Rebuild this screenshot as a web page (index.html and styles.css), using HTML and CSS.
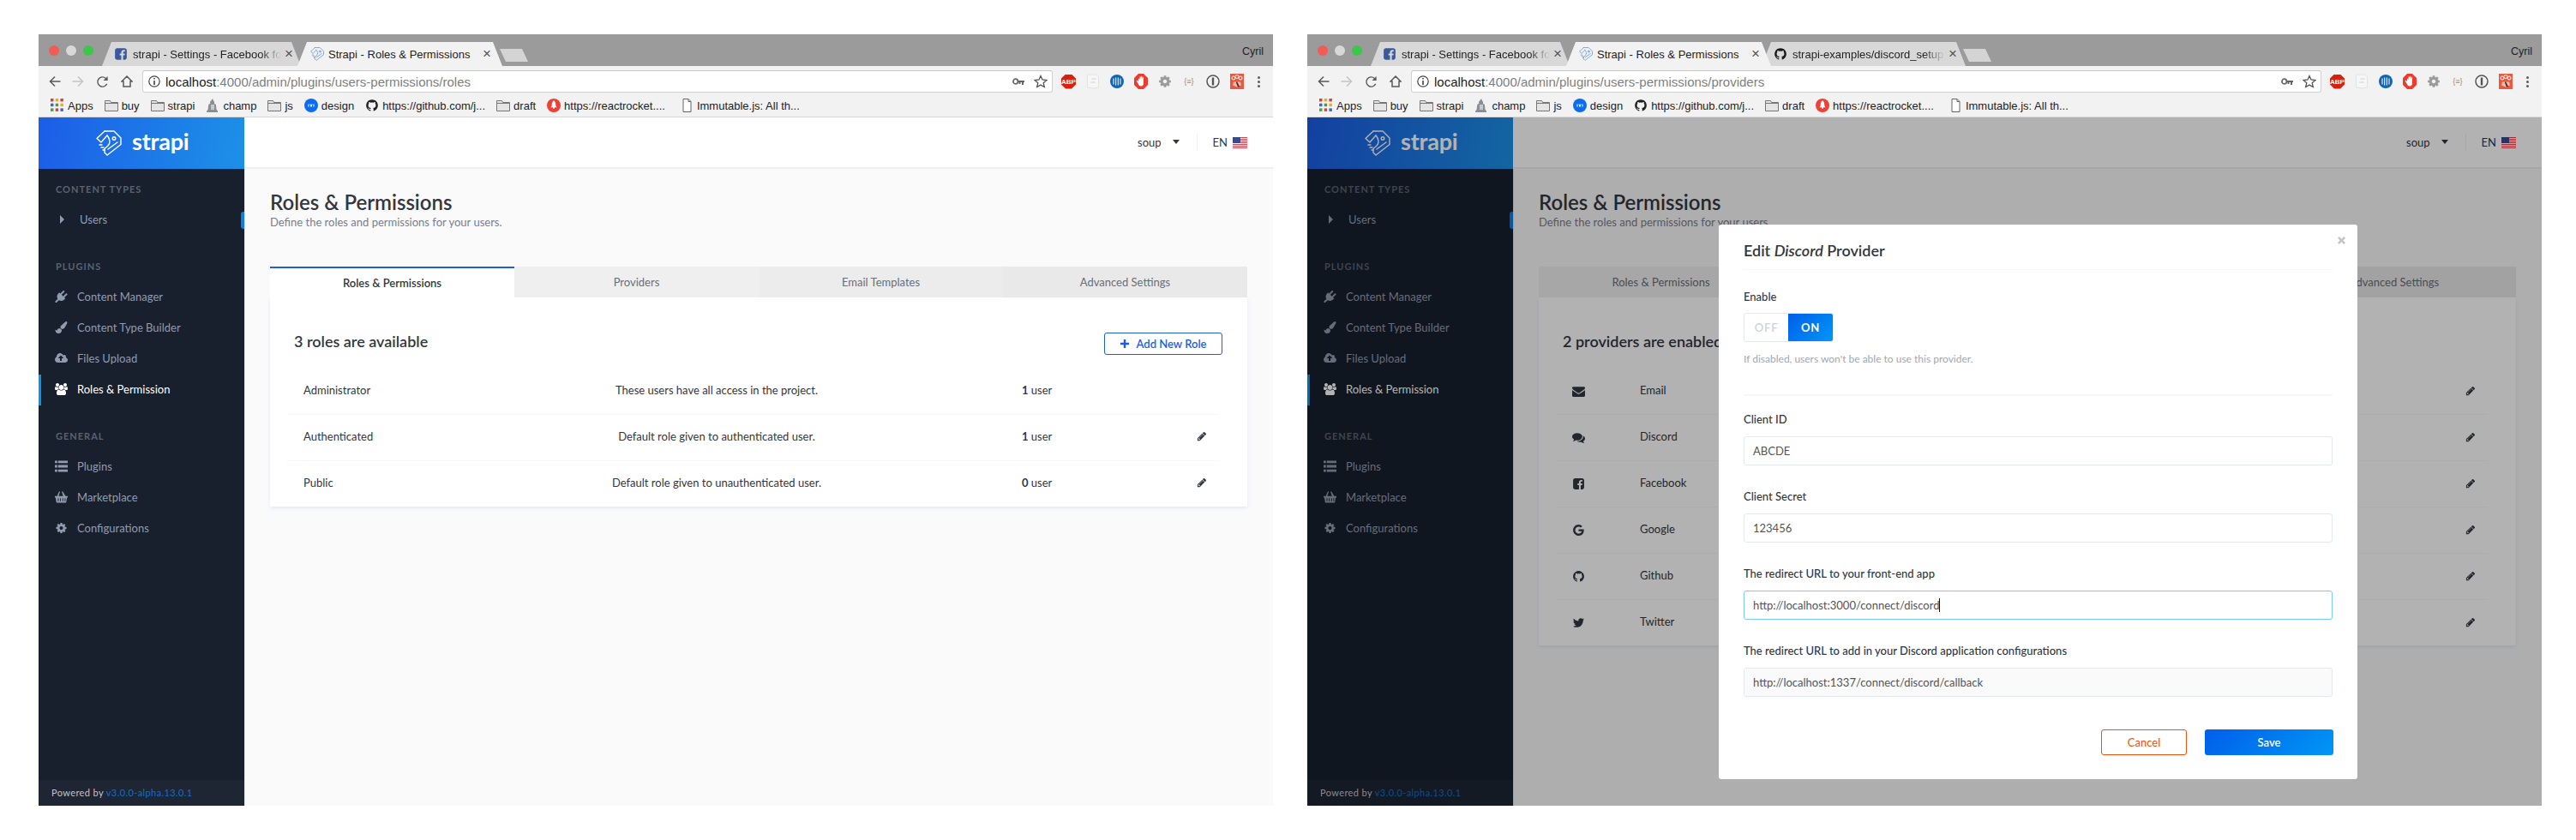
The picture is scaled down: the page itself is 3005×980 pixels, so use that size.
FILE: index.html
```html
<!DOCTYPE html>
<html lang="en">
<head>
<meta charset="utf-8">
<title>Strapi - Roles &amp; Permissions</title>
<link rel="stylesheet" href="styles.css">
</head>
<body>
<svg class="sprite" xmlns="http://www.w3.org/2000/svg">
  <symbol id="i-pencil" viewBox="0 0 1792 1792"><path d="M491 1536l91-91-235-235-91 91v107h128v128h107zm523-928q0-22-22-22-10 0-17 7l-542 542q-7 7-7 17 0 22 22 22 10 0 17-7l542-542q7-7 7-17zm-54-192l416 416-832 832h-416v-416zm683 96q0 53-37 90l-166 166-416-416 166-165q36-38 90-38 53 0 91 38l235 234q37 39 37 91z"/></symbol>
  <symbol id="i-envelope" viewBox="0 0 1792 1792"><path d="M1792 710v794q0 66-47 113t-113 47h-1472q-66 0-113-47t-47-113v-794q44 49 101 87 362 246 497 345 57 42 92.5 65.5t94.5 48 110 24.5h2q51 0 110-24.5t94.5-48 92.5-65.5q170-123 498-345 57-39 100-87zm0-294q0 79-49 151t-122 123q-376 261-468 325-10 7-42.5 30.5t-54 38-52 32.5-57.5 27-50 9h-2q-23 0-50-9t-57.5-27-52-32.5-54-38-42.5-30.5q-91-64-262-182.5t-205-142.5q-62-42-117-115.5t-55-136.5q0-78 41.5-130t118.5-52h1472q65 0 112.5 47t47.5 113z"/></symbol>
  <symbol id="i-github" viewBox="0 0 1792 1792"><path d="M896 128q209 0 385.5 103t279.5 279.5 103 385.5q0 251-146.5 451.5t-378.5 277.5q-27 5-40-7t-13-30q0-3 .5-76.5t.5-134.5q0-97-52-142 57-6 102.5-18t94-39 81-66.5 53-105 20.5-150.5q0-119-79-206 37-91-8-204-28-9-81 11t-92 44l-38 24q-93-26-192-26t-192 26q-16-11-42.5-27t-83.5-38.5-85-13.5q-45 113-8 204-79 87-79 206 0 85 20.5 150t52.5 105 80.5 67 94 39 102.5 18q-39 36-49 103-21 10-45 15t-57 5-65.5-21.5-55.5-62.5q-19-32-48.5-52t-49.5-24l-20-3q-21 0-29 4.5t-5 11.5 9 14 13 12l7 5q22 10 43.5 38t31.5 51l10 23q13 38 44 61.5t67 30 69.5 7 55.5-3.5l23-4q0 38 .5 88.5t.5 54.5q0 18-13 30t-40 7q-232-77-378.5-277.5t-146.5-451.5q0-209 103-385.5t279.5-279.5 385.5-103z"/></symbol>
  <symbol id="i-fb" viewBox="0 0 1792 1792"><path d="M1376 128q119 0 203.5 84.5t84.5 203.5v960q0 119-84.5 203.5t-203.5 84.5h-188v-595h199l30-232h-229v-148q0-56 23.5-84t91.5-28l122-1v-207q-63-9-178-9-136 0-217.5 80t-81.5 226v171h-200v232h200v595h-532q-119 0-203.5-84.5t-84.5-203.5v-960q0-119 84.5-203.5t203.5-84.5h960z"/></symbol>
  <symbol id="i-twitter" viewBox="0 0 1792 1792"><path d="M1684 408q-67 98-162 167 1 14 1 42 0 130-38 259.5t-115.5 248.5-184.5 210.5-258 146-323 54.5q-271 0-496-145 35 4 78 4 225 0 401-138-105-2-188-64.5t-114-159.5q33 5 61 5 43 0 85-11-112-23-185.5-111.5t-73.5-205.5v-4q68 38 146 41-66-44-105-115t-39-154q0-88 44-163 121 149 294.5 238.5t371.5 99.5q-8-38-8-74 0-134 94.5-228.5t228.5-94.5q140 0 236 102 109-21 205-78-37 115-142 178 93-10 186-50z"/></symbol>
  <symbol id="i-google" viewBox="0 0 1792 1792"><path d="M896 786h725q12 67 12 128 0 217-91 387.5t-259.5 266.5-386.5 96q-157 0-299-60.5t-245-163.5-163.5-245-60.5-299 60.5-299 163.5-245 245-163.5 299-60.5q300 0 515 201l-209 201q-123-119-306-119-129 0-238.5 65t-173.5 176.5-64 243.5 64 243.5 173.5 176.5 238.5 65q87 0 160-24t120-60 82-82 51.5-87 22.5-78h-436v-264z"/></symbol>
  <symbol id="i-comments" viewBox="0 0 1792 1792"><path d="M1408 768q0 139-94 257t-256.5 186.5-353.5 68.5q-86 0-176-16-124 88-278 128-36 9-86 16h-3q-11 0-20.5-8t-11.5-21q-1-3-1-6.5t.5-6.5 2-6l2.5-5 3.5-5.5 4-5 4.5-5 4-4.5q5-6 23-25t26-29.5 22.5-29 25-38.5 20.5-44q-124-72-195-177t-71-224q0-139 94-257t256.5-186.5 353.5-68.5 353.5 68.5 256.5 186.5 94 257zm384 256q0 120-71 224.5t-195 176.5q10 24 20.5 44t25 38.5 22.5 29 26 29.5 23 25q1 1 4 4.5t4.5 5 4 5 3.5 5.5l2.5 5 2 6 .5 6.5-1 6.5q-3 14-13 22t-22 7q-50-7-86-16-154-40-278-128-90 16-176 16-271 0-472-132 58 4 88 4 161 0 309-45t264-129q125-92 192-212t67-254q0-77-23-152 129 71 204 178t75 230z"/></symbol>
  <symbol id="i-users" viewBox="0 0 1920 1792"><path d="M593 896q-162 5-265 128h-134q-82 0-138-40.5t-56-118.5q0-353 124-353 6 0 43.5 21t97.5 42.5 119 21.5q67 0 133-23-5 37-5 66 0 139 81 256zm1071 637q0 120-73 189.5t-194 69.5h-874q-121 0-194-69.5t-73-189.5q0-53 3.5-103.5t14-109 26.5-108.5 43-97.5 62-81 85.5-53.5 111.5-20q10 0 43 21.5t73 48 107 48 135 21.5 135-21.5 107-48 73-48 43-21.5q61 0 111.5 20t85.5 53.5 62 81 43 97.5 26.5 108.5 14 109 3.5 103.5zm-1024-1277q0 106-75 181t-181 75-181-75-75-181 75-181 181-75 181 75 75 181zm704 384q0 159-112.5 271.5t-271.5 112.5-271.5-112.5-112.5-271.5 112.5-271.5 271.5-112.5 271.5 112.5 112.5 271.5zm576 225q0 78-56 118.5t-138 40.5h-134q-103-123-265-128 81-117 81-256 0-29-5-66 66 23 133 23 59 0 119-21.5t97.5-42.5 43.5-21q124 0 124 353zm-128-609q0 106-75 181t-181 75-181-75-75-181 75-181 181-75 181 75 75 181z"/></symbol>
  <symbol id="i-cog" viewBox="0 0 1792 1792"><path d="M1152 896q0-106-75-181t-181-75-181 75-75 181 75 181 181 75 181-75 75-181zm512-109v222q0 12-8 23t-20 13l-185 28q-19 54-39 91 35 50 107 138 10 12 10 25t-9 23q-27 37-99 108t-94 71q-12 0-26-9l-138-108q-44 23-91 38-16 136-29 186-7 28-36 28h-222q-14 0-24.5-8.5t-11.5-21.5l-28-184q-49-16-90-37l-141 107q-10 9-25 9-14 0-25-11-126-114-165-168-7-10-7-23 0-12 8-23 15-21 51-66.5t54-70.5q-27-50-41-99l-183-27q-13-2-21-12.5t-8-23.5v-222q0-12 8-23t19-13l186-28q14-46 39-92-40-57-107-138-10-12-10-24 0-10 9-23 26-36 98.5-107.5t94.5-71.5q13 0 26 10l138 107q44-23 91-38 16-136 29-186 7-28 36-28h222q14 0 24.5 8.5t11.5 21.5l28 184q49 16 90 37l142-107q9-9 24-9 13 0 25 10 129 119 165 170 7 8 7 22 0 12-8 23-15 21-51 66.5t-54 70.5q26 50 41 98l183 28q13 2 21 12.5t8 23.5z"/></symbol>
  <symbol id="i-cloud" viewBox="0 0 1920 1792"><path d="M1280 864q0-14-9-23l-352-352q-9-9-23-9t-23 9l-351 351q-10 12-10 24 0 14 9 23t23 9h224v352q0 13 9.5 22.5t22.5 9.5h192q13 0 22.5-9.5t9.5-22.5v-352h224q13 0 22.5-9.5t9.5-22.5zm640 288q0 159-112.5 271.5t-271.5 112.5h-1088q-185 0-316.5-131.5t-131.5-316.5q0-130 70-240t188-165q-2-30-2-43 0-212 150-362t362-150q156 0 285.5 87t188.5 231q71-62 166-62 106 0 181 75t75 181q0 76-41 138 130 31 213.5 135.5t83.5 238.5z"/></symbol>
  <symbol id="i-plug" viewBox="0 0 1792 1792"><path d="M1755 453q37 38 37 90.5t-37 90.5l-401 400 150 150-160 160q-163 163-389.5 186.5t-411.5-100.5l-362 362h-181v-181l362-362q-124-185-100.5-411.5t186.5-389.5l160-160 150 150 400-401q38-37 91-37t90 37 37 90.5-37 90.5l-400 401 234 234 401-400q38-37 91-37t90 37z"/></symbol>
  <symbol id="i-brush" viewBox="0 0 1792 1792"><path d="M1615 0q70 0 122.5 46.5t52.5 116.5q0 63-45 151-332 629-465 752-97 91-218 91-126 0-216.5-92.5t-90.5-219.5q0-128 92-212l638-579q59-54 130-54zm-909 1034q39 76 106.5 130t150.5 76l1 71q4 213-129.5 347t-348.5 134q-123 0-218-46.5t-152.5-127.5-86.5-183-29-220q7 5 41 30t62 44.5 59 36.5 46 17q41 0 55-37 25-66 57.5-112.5t69.5-76 88-47.5 103-25.5 125-10.5z"/></symbol>
  <symbol id="i-list" viewBox="0 0 16 14"><path d="M0 0h3v3H0zM4 0h12v3H4zM0 5.500h3v3H0zM4 5.500h12v3H4zM0 11h3v3H0zM4 11h12v3H4z"/></symbol>
  <symbol id="i-basket" viewBox="0 0 17 15"><path d="M0 6h17v2h-1l-1.100 7H2.100L1 8H0zM4 9v4h1V9zm3 0v4h1V9zm3 0v4h1V9zm3 0v4h1V9zM3 6l2.500-6h1.400L5 6zm11 0h-3l-1.900-6h1.400z"/></symbol>
  <symbol id="i-plus" viewBox="0 0 10 10"><path d="M3.800 0h2.400v3.800H10v2.400H6.200V10H3.800V6.200H0V3.800h3.800z"/></symbol>
  <symbol id="i-times" viewBox="0 0 10 10"><path d="M2 0l3 3 3-3 2 2-3 3 3 3-2 2-3-3-3 3-2-2 3-3-3-3z"/></symbol>
  <symbol id="i-folder" viewBox="0 0 16 16"><path d="M.5 14.500V2.500h6l1 2h8v10z" fill="#e4e4e4" stroke="#777"/><path d="M.5 5.500h15" stroke="#777" fill="none"/></symbol>
  <symbol id="i-file" viewBox="0 0 10 16"><path d="M.5.500h6l3 3v12H.5z" fill="#fff" stroke="#666"/><path d="M6.500.500v3h3" fill="none" stroke="#666"/></symbol>
  <symbol id="i-apps" viewBox="0 0 14 14"><path fill="#e53b30" d="M0 0h3v3H0z"/><path fill="#f1b000" d="M5 0h3v3H5z"/><path fill="#e53b30" d="M10 0h3v3h-3z"/><path fill="#3367d6" d="M0 5h3v3H0z"/><path fill="#3da34a" d="M5 5h3v3H5z"/><path fill="#f1b000" d="M10 5h3v3h-3z"/><path fill="#3da34a" d="M0 10h3v3H0z"/><path fill="#e53b30" d="M5 10h3v3H5z"/><path fill="#3367d6" d="M10 10h3v3h-3z"/></symbol>
  <symbol id="i-champ" viewBox="0 0 14 16"><path fill="#8a8d92" d="M7 0l1.200 3 1 .6-.4 2.200 2 1.200.8 6 1.400 1.500V16H.1v-1.500L1.500 13l.8-6 2-1.200-.4-2.200 1-.6z"/><path fill="#c8cacd" d="M5 7h4v6H5z"/></symbol>
  <symbol id="i-design" viewBox="0 0 16 16"><circle cx="8" cy="8" r="8" fill="#0a6cf0"/><path d="M5 6.500v3M7 6.500l1 3 1-3M11 6.500v3" stroke="#fff" fill="none"/></symbol>
  <symbol id="i-rocket" viewBox="0 0 16 16"><circle cx="8" cy="8" r="8" fill="#ef4135"/><path fill="#fff" d="M8 2c2 2 2.500 4 2.200 6l1.300 2.500-2.300-.5-.2 1.500H7L6.800 10l-2.300.5L5.800 8C5.500 6 6 4 8 2z"/></symbol>
  <symbol id="i-back" viewBox="0 0 14 14"><path d="M13.500 7H1.500M7 1.500L1.500 7 7 12.500" fill="none" stroke="currentColor" stroke-width="1.500"/></symbol>
  <symbol id="i-forward" viewBox="0 0 14 14"><path d="M.5 7h12M7 1.500L12.500 7 7 12.500" fill="none" stroke="currentColor" stroke-width="1.500"/></symbol>
  <symbol id="i-reload" viewBox="0 0 16 16"><path d="M13.500 10.500A6 6 0 1 1 12 3.500L14 5.500" fill="none" stroke="currentColor" stroke-width="1.500"/><path d="M14.500 1v5.500H9z" fill="currentColor"/></symbol>
  <symbol id="i-home" viewBox="0 0 14 14"><path d="M7 1L1 7h2v6h8V7h2z" fill="none" stroke="currentColor" stroke-width="1.500"/></symbol>
  <symbol id="i-info" viewBox="0 0 14 14"><circle cx="7" cy="7" r="6.200" fill="none" stroke="#444" stroke-width="1.200"/><path d="M6.200 3h1.600v1.600H6.200zM6.200 6h1.600v5H6.200z" fill="#444"/></symbol>
  <symbol id="i-key" viewBox="0 0 14 10"><circle cx="3.700" cy="5" r="2.800" fill="none" stroke="#666" stroke-width="1.700"/><path d="M6 4h8v2h-1v3h-2V6H9.500v2h-2V6H6z" fill="#666"/></symbol>
  <symbol id="i-star" viewBox="0 0 16 16"><path d="M8 1.500l2 4.500 4.900.5-3.700 3.200 1.100 4.800L8 12.100l-4.300 2.400 1.100-4.800L1.100 6.500 6 6z" fill="none" stroke="#555" stroke-width="1.300"/></symbol>
  <symbol id="i-page" viewBox="0 0 15 18"><path d="M1 1h10l3 3v12l-6 1-7-1z" fill="#f6f6f6" stroke="#e2e2e2"/><path d="M6 6h5M5 10h5" stroke="#d0d0d0" fill="none"/></symbol>
  <symbol id="i-bars" viewBox="0 0 16 16"><circle cx="8" cy="8" r="8" fill="#1165b5"/><path d="M4 4.500v7M6.700 3.500v9M9.300 3.500v9M12 4.500v7" stroke="#fff" fill="none"/></symbol>
  <symbol id="i-hand" viewBox="0 0 16 18"><path d="M5 0h6l5 5v8l-5 5H5l-5-5V5z" fill="#ee3a2c"/><path d="M5 6.500c0-1 1-1 1.200 0L6.500 8V4c0-1 1.200-1 1.300 0v3l.3-3.500c.1-1 1.200-1 1.200 0V7l.4-2.500c.2-1 1.300-.8 1.200.2L11 11c0 2-1 3.500-3 3.500s-2.500-1-3.500-3L3 9c-.5-1 .6-1.500 1.200-.8L5 9.500z" fill="#fff"/></symbol>
  <symbol id="i-1p" viewBox="0 0 16 16"><circle cx="8" cy="8" r="7" fill="none" stroke="#555" stroke-width="1.500"/><path d="M6.800 3.500h2.400v9H6.800z" fill="#555"/></symbol>
  <symbol id="i-paw" viewBox="0 0 16 18"><path fill="#e9593f" d="M0 0h16v18H0z"/><circle cx="4" cy="5" r="2" fill="none" stroke="#fff"/><circle cx="8" cy="3.500" r="2" fill="none" stroke="#fff"/><circle cx="12" cy="5" r="2" fill="none" stroke="#fff"/><path d="M4 9.500h8l1 4-5 2-5-2z" fill="#f6b5a8"/><path d="M8 9l3 6-2 .5-2-5z" fill="#333"/></symbol>
  <symbol id="i-flag" viewBox="0 0 17 13"><path fill="#fff" d="M0 0h17v13H0z"/><path fill="#d8434e" d="M0 0h17v1H0zM0 2h17v1H0zM0 4h17v1H0zM0 6h17v1H0zM0 8h17v1H0zM0 10h17v1H0zM0 12h17v1H0z"/><path fill="#3b4a86" d="M0 0h9v7H0z"/></symbol>
  <symbol id="i-bird" viewBox="0 0 30 30"><g fill="none" stroke="currentColor" stroke-width="1.400" stroke-linejoin="round" stroke-linecap="round"><path d="M10 1L1 9.500 6 14l7-8"/><path d="M10 1h11l8 8v7.500L13 29l-3-3v-4.500l4-3.500c3-3 2.500-8-1-12"/><path d="M14 22l11-8"/><circle cx="21" cy="9.500" r="1.800"/><path d="M4 17h3M6 20h3M8 23h2"/></g></symbol>
</svg>

<main class="desktop">

  <!-- Left window -->
  <section class="window">
    <header class="strip">
      <div class="lights"><span class="light light-red"></span><span class="light light-grey"></span><span class="light light-green"></span></div>
      <div class="tabs">
        <div class="ctab ctab-bg ctab-one"><svg class="fav fav-fb"><use href="#i-fb"/></svg><span class="ctab-text ctab-fade">strapi - Settings - Facebook fo</span><span class="ctab-x">×</span></div>
        <div class="ctab ctab-on ctab-two"><svg class="fav fav-bird"><use href="#i-bird"/></svg><span class="ctab-text">Strapi - Roles &amp; Permissions</span><span class="ctab-x">×</span></div>
        <div class="newtab"></div>
      </div>
      <span class="profile">Cyril</span>
    </header>
    <div class="toolbar">
      <div class="nav">
        <svg class="nav-i nav-back"><use href="#i-back"/></svg>
        <svg class="nav-i nav-fwd"><use href="#i-forward"/></svg>
        <svg class="nav-i nav-reload"><use href="#i-reload"/></svg>
        <svg class="nav-i nav-home"><use href="#i-home"/></svg>
      </div>
      <div class="omnibox">
        <svg class="omni-info"><use href="#i-info"/></svg>
        <span class="url"><span class="url-host">localhost</span>:4000/admin/plugins/users-permissions/roles</span>
        <svg class="omni-key"><use href="#i-key"/></svg>
        <svg class="omni-star"><use href="#i-star"/></svg>
      </div>
      <div class="exts">
        <span class="ext-abp">ABP</span>
        <svg class="ext"><use href="#i-page"/></svg>
        <svg class="ext"><use href="#i-bars"/></svg>
        <svg class="ext"><use href="#i-hand"/></svg>
        <svg class="ext ext-gear"><use href="#i-cog"/></svg>
        <span class="ext-json">{≡}</span>
        <svg class="ext"><use href="#i-1p"/></svg>
        <svg class="ext"><use href="#i-paw"/></svg>
        <span class="dots"><i></i><i></i><i></i></span>
      </div>
    </div>
    <nav class="bookmarks">
      <a class="bm"><svg class="bm-i"><use href="#i-apps"/></svg>Apps</a>
      <a class="bm"><svg class="bm-i"><use href="#i-folder"/></svg>buy</a>
      <a class="bm"><svg class="bm-i"><use href="#i-folder"/></svg>strapi</a>
      <a class="bm"><svg class="bm-i"><use href="#i-champ"/></svg>champ</a>
      <a class="bm"><svg class="bm-i"><use href="#i-folder"/></svg>js</a>
      <a class="bm"><svg class="bm-i"><use href="#i-design"/></svg>design</a>
      <a class="bm"><svg class="bm-i"><use href="#i-github"/></svg>https://github.com/j...</a>
      <a class="bm"><svg class="bm-i"><use href="#i-folder"/></svg>draft</a>
      <a class="bm"><svg class="bm-i"><use href="#i-rocket"/></svg>https://reactrocket....</a>
      <a class="bm"><svg class="bm-i bm-file"><use href="#i-file"/></svg>Immutable.js: All th...</a>
    </nav>
    <div class="app">
      <aside class="side">
        <div class="brand"><svg class="bird"><use href="#i-bird"/></svg><span class="brand-name">strapi</span></div>
        <div class="side-nav">
          <h3 class="side-title">Content Types</h3>
          <a class="link link-users"><span class="caret-r"></span>Users</a>
          <h3 class="side-title side-title-next">Plugins</h3>
          <a class="link"><svg class="link-i"><use href="#i-plug"/></svg>Content Manager</a>
          <a class="link"><svg class="link-i"><use href="#i-brush"/></svg>Content Type Builder</a>
          <a class="link"><svg class="link-i"><use href="#i-cloud"/></svg>Files Upload</a>
          <a class="link link-on"><svg class="link-i"><use href="#i-users"/></svg>Roles &amp; Permission</a>
          <h3 class="side-title side-title-next">General</h3>
          <a class="link"><svg class="link-i"><use href="#i-list"/></svg>Plugins</a>
          <a class="link"><svg class="link-i"><use href="#i-basket"/></svg>Marketplace</a>
          <a class="link"><svg class="link-i"><use href="#i-cog"/></svg>Configurations</a>
        </div>
        <div class="side-foot">Powered by <span class="version">v3.0.0-alpha.13.0.1</span></div>
      </aside>
      <div class="page">
        <div class="topbar">
          <span class="who">soup</span><span class="caret-d"></span><span class="topbar-sep"></span><span class="lang">EN</span><svg class="flag"><use href="#i-flag"/></svg>
        </div>
        <div class="content">
          <h1 class="title">Roles &amp; Permissions</h1>
          <p class="sub">Define the roles and permissions for your users.</p>
          <div class="ptabs">
            <div class="ptab ptab-on">Roles &amp; Permissions</div>
            <div class="ptab ptab-2">Providers</div>
            <div class="ptab ptab-3">Email Templates</div>
            <div class="ptab ptab-4">Advanced Settings</div>
          </div>
          <div class="panel">
            <div class="panel-head">
              <h2 class="panel-title">3 roles are available</h2>
              <a class="btn-add"><svg class="plus"><use href="#i-plus"/></svg>Add New Role</a>
            </div>
            <div class="rows">
              <div class="row"><span>Administrator</span><span class="desc">These users have all access in the project.</span><span class="count"><b>1</b> user</span></div>
              <div class="row"><span>Authenticated</span><span class="desc">Default role given to authenticated user.</span><span class="count"><b>1</b> user</span><svg class="pen"><use href="#i-pencil"/></svg></div>
              <div class="row"><span>Public</span><span class="desc">Default role given to unauthenticated user.</span><span class="count"><b>0</b> user</span><svg class="pen"><use href="#i-pencil"/></svg></div>
            </div>
          </div>
        </div>
      </div>
    </div>
  </section>

  <!-- Right window -->
  <section class="window">
    <header class="strip">
      <div class="lights"><span class="light light-red"></span><span class="light light-grey"></span><span class="light light-green"></span></div>
      <div class="tabs">
        <div class="ctab ctab-bg ctab-one"><svg class="fav fav-fb"><use href="#i-fb"/></svg><span class="ctab-text ctab-fade">strapi - Settings - Facebook fo</span><span class="ctab-x">×</span></div>
        <div class="ctab ctab-on ctab-two"><svg class="fav fav-bird"><use href="#i-bird"/></svg><span class="ctab-text">Strapi - Roles &amp; Permissions</span><span class="ctab-x">×</span></div>
        <div class="ctab ctab-bg ctab-three"><svg class="fav fav-gh"><use href="#i-github"/></svg><span class="ctab-text ctab-fade">strapi-examples/discord_setup</span><span class="ctab-x">×</span></div>
        <div class="newtab"></div>
      </div>
      <span class="profile">Cyril</span>
    </header>
    <div class="toolbar">
      <div class="nav">
        <svg class="nav-i nav-back"><use href="#i-back"/></svg>
        <svg class="nav-i nav-fwd"><use href="#i-forward"/></svg>
        <svg class="nav-i nav-reload"><use href="#i-reload"/></svg>
        <svg class="nav-i nav-home"><use href="#i-home"/></svg>
      </div>
      <div class="omnibox">
        <svg class="omni-info"><use href="#i-info"/></svg>
        <span class="url"><span class="url-host">localhost</span>:4000/admin/plugins/users-permissions/providers</span>
        <svg class="omni-key"><use href="#i-key"/></svg>
        <svg class="omni-star"><use href="#i-star"/></svg>
      </div>
      <div class="exts">
        <span class="ext-abp">ABP</span>
        <svg class="ext"><use href="#i-page"/></svg>
        <svg class="ext"><use href="#i-bars"/></svg>
        <svg class="ext"><use href="#i-hand"/></svg>
        <svg class="ext ext-gear"><use href="#i-cog"/></svg>
        <span class="ext-json">{≡}</span>
        <svg class="ext"><use href="#i-1p"/></svg>
        <svg class="ext"><use href="#i-paw"/></svg>
        <span class="dots"><i></i><i></i><i></i></span>
      </div>
    </div>
    <nav class="bookmarks">
      <a class="bm"><svg class="bm-i"><use href="#i-apps"/></svg>Apps</a>
      <a class="bm"><svg class="bm-i"><use href="#i-folder"/></svg>buy</a>
      <a class="bm"><svg class="bm-i"><use href="#i-folder"/></svg>strapi</a>
      <a class="bm"><svg class="bm-i"><use href="#i-champ"/></svg>champ</a>
      <a class="bm"><svg class="bm-i"><use href="#i-folder"/></svg>js</a>
      <a class="bm"><svg class="bm-i"><use href="#i-design"/></svg>design</a>
      <a class="bm"><svg class="bm-i"><use href="#i-github"/></svg>https://github.com/j...</a>
      <a class="bm"><svg class="bm-i"><use href="#i-folder"/></svg>draft</a>
      <a class="bm"><svg class="bm-i"><use href="#i-rocket"/></svg>https://reactrocket....</a>
      <a class="bm"><svg class="bm-i bm-file"><use href="#i-file"/></svg>Immutable.js: All th...</a>
    </nav>
    <div class="app">
      <aside class="side">
        <div class="brand"><svg class="bird"><use href="#i-bird"/></svg><span class="brand-name">strapi</span></div>
        <div class="side-nav">
          <h3 class="side-title">Content Types</h3>
          <a class="link link-users"><span class="caret-r"></span>Users</a>
          <h3 class="side-title side-title-next">Plugins</h3>
          <a class="link"><svg class="link-i"><use href="#i-plug"/></svg>Content Manager</a>
          <a class="link"><svg class="link-i"><use href="#i-brush"/></svg>Content Type Builder</a>
          <a class="link"><svg class="link-i"><use href="#i-cloud"/></svg>Files Upload</a>
          <a class="link link-on"><svg class="link-i"><use href="#i-users"/></svg>Roles &amp; Permission</a>
          <h3 class="side-title side-title-next">General</h3>
          <a class="link"><svg class="link-i"><use href="#i-list"/></svg>Plugins</a>
          <a class="link"><svg class="link-i"><use href="#i-basket"/></svg>Marketplace</a>
          <a class="link"><svg class="link-i"><use href="#i-cog"/></svg>Configurations</a>
        </div>
        <div class="side-foot">Powered by <span class="version">v3.0.0-alpha.13.0.1</span></div>
      </aside>
      <div class="page">
        <div class="topbar">
          <span class="who">soup</span><span class="caret-d"></span><span class="topbar-sep"></span><span class="lang">EN</span><svg class="flag"><use href="#i-flag"/></svg>
        </div>
        <div class="content">
          <h1 class="title">Roles &amp; Permissions</h1>
          <p class="sub">Define the roles and permissions for your users.</p>
          <div class="ptabs">
            <div class="ptab ptab-1">Roles &amp; Permissions</div>
            <div class="ptab ptab-on">Providers</div>
            <div class="ptab ptab-3">Email Templates</div>
            <div class="ptab ptab-4">Advanced Settings</div>
          </div>
          <div class="panel">
            <div class="panel-head">
              <h2 class="panel-title">2 providers are enabled</h2>
            </div>
            <div class="rows">
              <div class="row row-prov"><svg class="prov-i"><use href="#i-envelope"/></svg><span class="prov-name">Email</span><svg class="pen"><use href="#i-pencil"/></svg></div>
              <div class="row row-prov"><svg class="prov-i"><use href="#i-comments"/></svg><span class="prov-name">Discord</span><svg class="pen"><use href="#i-pencil"/></svg></div>
              <div class="row row-prov"><svg class="prov-i"><use href="#i-fb"/></svg><span class="prov-name">Facebook</span><svg class="pen"><use href="#i-pencil"/></svg></div>
              <div class="row row-prov"><svg class="prov-i"><use href="#i-google"/></svg><span class="prov-name">Google</span><svg class="pen"><use href="#i-pencil"/></svg></div>
              <div class="row row-prov"><svg class="prov-i"><use href="#i-github"/></svg><span class="prov-name">Github</span><svg class="pen"><use href="#i-pencil"/></svg></div>
              <div class="row row-prov"><svg class="prov-i"><use href="#i-twitter"/></svg><span class="prov-name">Twitter</span><svg class="pen"><use href="#i-pencil"/></svg></div>
            </div>
          </div>
        </div>
      </div>
    </div>

    <div class="overlay">
      <div class="modal">
        <header class="modal-head">
          <h2 class="modal-title">Edit <em>Discord</em> Provider</h2>
          <svg class="modal-x"><use href="#i-times"/></svg>
        </header>
        <div class="label label-enable">Enable</div>
        <div class="toggle"><span class="toggle-off">OFF</span><span class="toggle-on">ON</span></div>
        <p class="hint">If disabled, users won't be able to use this provider.</p>
        <hr class="modal-rule">
        <div class="label label-first">Client ID</div>
        <div class="input">ABCDE</div>
        <div class="label">Client Secret</div>
        <div class="input">123456</div>
        <div class="label">The redirect URL to your front-end app</div>
        <div class="input input-focus"><span class="caret-text">http://localhost:3000/connect/discord</span></div>
        <div class="label">The redirect URL to add in your Discord application configurations</div>
        <div class="input input-off">http://localhost:1337/connect/discord/callback</div>
        <footer class="modal-foot">
          <a class="btn btn-cancel">Cancel</a>
          <a class="btn btn-save">Save</a>
        </footer>
      </div>
    </div>
  </section>
</main>
</body>
</html>
```

FILE: styles.css
```css
* { box-sizing: border-box; }
html, body { margin: 0; padding: 0; background: #fff; }
body { width: 3005px; height: 980px; overflow: hidden; font-family: "Lato", "Liberation Sans", sans-serif; color: #333740; }
h1, h2, h3, p, hr { margin: 0; }
.sprite { display: none; }
svg { display: block; fill: currentColor; flex: none; }

.desktop { display: flex; gap: 40px; height: 980px; padding: 40px 40px 40px 45px; }
.window { position: relative; width: 1440px; height: 900px; display: flex; flex-direction: column; overflow: hidden; font-size: 13px; }

/* browser chrome */
.strip { height: 37px; flex: none; background: #9b9b9b; display: flex; font-family: "Liberation Sans", sans-serif; color: #222; }
.lights { display: flex; gap: 8px; padding: 13px 0 0 12px; }
.light { width: 12px; height: 12px; border-radius: 50%; }
.light-red { background: #f25c54; }
.light-grey { background: #d8d8d8; }
.light-green { background: #3bc74a; }
.tabs { display: flex; margin-left: 10px; padding-top: 9px; }
.ctab { height: 28px; display: flex; align-items: center; font-size: 13px; clip-path: polygon(0 100%, 11px 0, calc(100% - 11px) 0, 100% 100%); }
.ctab-bg { background: #d8d8d8; }
.ctab-on { background: #f2f2f2; position: relative; z-index: 1; }
.ctab-one { width: 232px; padding-left: 14px; }
.ctab-two { width: 239px; padding-left: 15px; margin-left: -4px; }
.ctab-three { width: 238px; padding-left: 14px; margin-left: -11px; }
.fav { width: 16px; height: 16px; margin-right: 6px; }
.ctab-two .fav { margin-right: 5px; }
.fav-fb { color: #3b5998; }
.fav-bird { color: #5b8fe6; }
.fav-gh { color: #1a1a1a; }
.ctab-text { white-space: nowrap; }
.ctab-one .ctab-text { width: 173px; }
.ctab-two .ctab-text { width: 176px; }
.ctab-three .ctab-text { width: 178px; }
.ctab-fade { -webkit-mask-image: linear-gradient(to right, #000 86%, transparent 100%); mask-image: linear-gradient(to right, #000 86%, transparent 100%); }
.ctab-x { margin-left: 4px; font-size: 17px; line-height: 16px; color: #555; }
.newtab { width: 33px; height: 15px; margin: 8px 0 0 -3px; background: #d4d4d4; clip-path: polygon(0 0, calc(100% - 7px) 0, 100% 100%, 7px 100%); }
.profile { margin: 12px 11px 0 auto; font-size: 12.500px; line-height: 16px; }

.toolbar { height: 35px; flex: none; background: #f2f2f2; display: flex; align-items: flex-start; padding-top: 5px; font-family: "Liberation Sans", sans-serif; }
.nav { width: 121px; flex: none; height: 26px; position: relative; display: flex; align-items: center; color: #5a5a5a; padding-left: 12px; }
.nav-i { width: 14px; height: 14px; }
.nav-fwd { margin-left: 13px; color: #c4c4c4; }
.nav-reload { margin-left: 14px; width: 15px; height: 15px; }
.nav-home { margin-left: 14px; }
.omnibox { width: 1062px; height: 26px; flex: none; background: #fff; border: 1px solid #d2d2d2; border-top-color: #c8c8c8; border-radius: 3px; display: flex; align-items: center; padding-left: 6px; font-size: 15px; }
.omni-info { width: 14px; height: 14px; margin-right: 6px; }
.url { color: #808080; white-space: nowrap; }
.url-host { color: #1c1c1c; }
.omni-key { width: 14px; height: 10px; margin-left: auto; color: #666; }
.omni-star { width: 16px; height: 16px; margin: 0 5px 0 11px; }
.exts { display: flex; align-items: center; height: 26px; padding-left: 10px; }
.ext { width: 16px; height: 18px; margin-right: 12px; }
.ext-gear { color: #9a9a9a; }
.ext-abp { width: 17px; height: 17px; margin-right: 12px; background: #d9200f; color: #fff; font-size: 8px; font-weight: bold; line-height: 17px; text-align: center; clip-path: polygon(30% 0, 70% 0, 100% 30%, 100% 70%, 70% 100%, 30% 100%, 0 70%, 0 30%); }
.ext-json { width: 16px; margin-right: 12px; font-size: 9px; color: #8d8d8d; text-align: center; white-space: nowrap; }
.dots { display: flex; flex-direction: column; gap: 2px; margin-left: 4px; }
.dots i { width: 3px; height: 3px; border-radius: 50%; background: #5a5a5a; display: block; }

.bookmarks { height: 25px; flex: none; background: #f2f2f2; border-bottom: 1px solid #d6d6d6; display: flex; align-items: center; gap: 13px; padding: 0 0 2px 14px; font-family: "Liberation Sans", sans-serif; font-size: 13px; color: #222; white-space: nowrap; }
.bm { display: flex; align-items: center; gap: 4px; }
.bm-i { width: 16px; height: 16px; }
.bm-file { width: 11px; margin-left: 7px; margin-right: 2px; }

/* application */
.app { flex: 1; display: flex; min-height: 0; }
.side { width: 240px; flex: none; background: #18202e; display: flex; flex-direction: column; }
.brand { height: 60px; flex: none; background: linear-gradient(100deg, #1c5de7, #1c91e7); color: #fff; display: flex; align-items: center; padding-left: 67px; }
.bird { width: 30px; height: 30px; margin-right: 12px; }
.brand-name { font-size: 27px; font-weight: 700; line-height: 30px; margin-top: -5px; letter-spacing: -.2px; }
.side-nav { flex: 1; padding-top: 16px; }
.side-title { height: 16px; margin: 0 0 10px; padding-left: 20px; font-size: 11px; line-height: 16px; font-weight: 700; letter-spacing: 1px; text-transform: uppercase; color: #5b626f; }
.side-title-next { margin-top: 28px; }
.link { position: relative; height: 36px; display: flex; align-items: center; padding: 0 0 2px 16px; font-size: 13px; color: #919bae; border-left: 3px solid transparent; }
.link-on { color: #fff; border-left-color: #0097f7; }
.link-users::after { content: ""; position: absolute; right: 0; top: 8px; width: 4px; height: 20px; background: #0e7de7; border-radius: 3px 0 0 3px; }
.caret-r { width: 0; height: 0; margin: 0 18px 0 6px; border-left: 5px solid #919bae; border-top: 5px solid transparent; border-bottom: 5px solid transparent; }
.link-i { width: 15px; height: 14px; margin-right: 11px; }
.side-foot { height: 30px; flex: none; background: #1e2633; padding-left: 15px; font-size: 11px; line-height: 30px; letter-spacing: .4px; color: #c0c4cc; }
.version { color: #0f6fc4; }

.page { flex: 1; min-width: 0; background: #fafafb; display: flex; flex-direction: column; box-shadow: inset 1px 0 0 #e3e6eb; }
.topbar { height: 60px; flex: none; background: #fff; border-bottom: 2px solid #eeeff1; display: flex; align-items: center; justify-content: flex-end; padding-right: 30px; font-size: 13px; color: #333740; }
.caret-d { margin: -2px 20px 0 13px; border-top: 5px solid #333740; border-left: 4px solid transparent; border-right: 4px solid transparent; }
.topbar-sep { width: 1px; height: 20px; background: #f0f0f2; margin-right: 18px; }
.lang { margin-right: 6px; }
.flag { width: 17px; height: 13px; }
.content { padding: 24px 30px 0; }
.title { font-size: 24px; line-height: 30px; font-weight: 600; color: #333740; }
.sub { font-size: 13px; line-height: 16px; color: #787e8f; margin-bottom: 44px; }
.ptabs { display: flex; height: 36px; }
.ptab { flex: 1; display: flex; align-items: center; justify-content: center; font-size: 13px; color: #6a6e78; }
.ptab-on { background: #fff; border-top: 2px solid #1c5de7; color: #333740; font-weight: 600; }
.ptab-1 { background: #f0f0f0; }
.ptab-2 { background: #efefef; }
.ptab-3 { background: #ececec; }
.ptab-4 { background: #e9e9e9; }
.panel { background: #fff; box-shadow: 0 2px 4px #e3e9f3; padding: 41px 0 0; }
.panel-head { height: 26px; display: flex; align-items: center; justify-content: space-between; padding: 0 29px 0 28px; margin-bottom: 16px; }
.panel-title { font-size: 18px; font-weight: 600; color: #333740; white-space: nowrap; margin-top: -6px; }
.btn-add { width: 138px; height: 26px; border: 1px solid #1c5de7; border-radius: 3px; color: #1c5de7; font-size: 13px; font-weight: 600; display: flex; align-items: center; justify-content: center; }
.plus { width: 10px; height: 10px; margin-right: 9px; }
.rows { padding: 0 33px 0 20px; }
.row { height: 54px; display: grid; grid-template-columns: 240px 484px 114px 1fr 18px; align-items: center; padding: 0 11px 4px 19px; border-bottom: 1px solid #f6f6f6; font-size: 13px; color: #333740; }
.row:last-child { border-bottom: 0; height: 53px; }
.desc { text-align: center; }
.count { grid-column: 4; }
.count b { font-weight: 700; }
.pen { grid-column: 5; width: 12px; height: 12px; color: #333740; justify-self: center; }
.row-prov { grid-template-columns: 79px 1fr 18px; padding-bottom: 0; }
.prov-i { width: 15px; height: 15px; color: #333740; }
.prov-name { margin-top: -4px; }
.row-prov .pen { grid-column: 3; margin-top: -2px; }

/* modal */
.overlay { position: absolute; left: 0; right: 0; top: 97px; bottom: 0; background: rgba(0, 0, 0, .3); padding: 125px 0 0 480px; }
.modal { position: relative; width: 745px; height: 647px; background: #fff; border-radius: 3px; padding: 0 29px; }
.modal-head { height: 53px; padding-top: 19px; border-bottom: 1px solid #f6f6f6; }
.modal-title { font-size: 18px; line-height: 22px; font-weight: 600; color: #333740; }
.modal-title em { font-style: italic; }
.modal-x { position: absolute; top: 14px; right: 14px; width: 9px; height: 9px; color: #c3c5c8; }
.label { height: 16px; margin-top: 29px; font-size: 13px; line-height: 15px; font-weight: 500; color: #333740; white-space: nowrap; }
.label-enable { margin-top: 24px; }
.label-first { margin-top: 20px; }
.toggle { width: 105px; height: 34px; margin-top: 10px; border: 1px solid #e3e9f3; border-radius: 3px; display: flex; overflow: hidden; font-size: 13px; font-weight: 700; letter-spacing: .8px; line-height: 32px; text-align: center; }
.toggle-off { width: 51px; color: #ced3db; font-weight: 600; }
.toggle-on { flex: 1; color: #fff; background: linear-gradient(315deg, #0097f6, #005eea); }
.hint { margin-top: 12px; font-size: 12px; line-height: 16px; color: #9ea7b8; }
.modal-rule { height: 2px; margin-top: 33px; border: 0; background: #f6f6f6; }
.input { height: 34px; margin-top: 11px; border: 1px solid #e3e9f3; border-radius: 3px; padding-left: 10px; font-size: 13px; line-height: 32px; color: #555; white-space: nowrap; }
.input-focus { border-color: #78caff; }
.input-off { background: #fafafb; }
.caret-text { border-right: 1px solid #111; }
.modal-foot { display: flex; justify-content: flex-end; gap: 21px; margin: 38px -1px 0 0; }
.btn { height: 30px; border-radius: 3px; display: flex; align-items: center; justify-content: center; font-size: 13px; font-weight: 600; }
.btn-cancel { width: 100px; border: 1px solid #f64d0a; color: #f64d0a; font-weight: 400; }
.btn-save { width: 150px; background: linear-gradient(315deg, #0097f6, #005eea); color: #fff; }
```
